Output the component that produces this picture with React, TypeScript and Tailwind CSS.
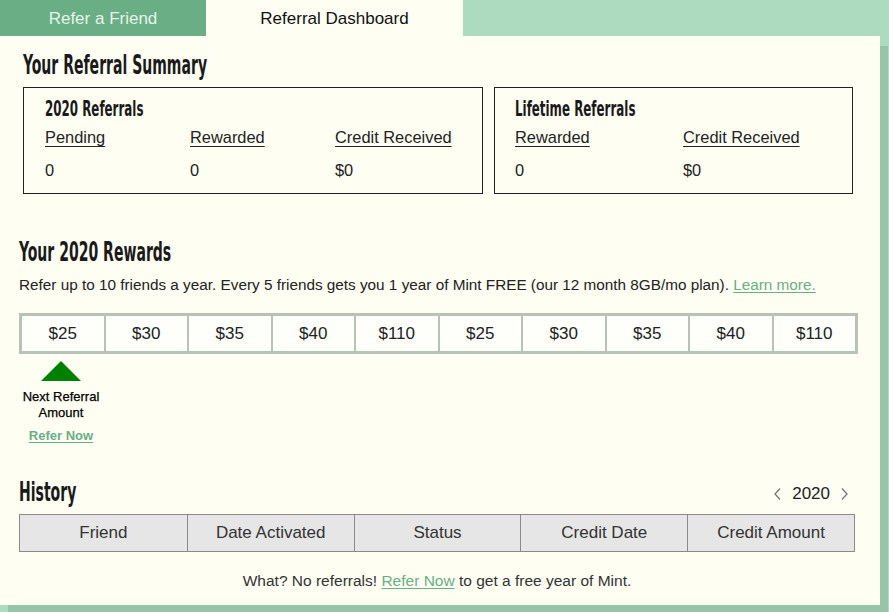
import React from "react";

const H = ({ children, className = "" }: { children: React.ReactNode; className?: string }) => (
  <div className={"h-[24px] overflow-visible whitespace-nowrap " + className}>
    <span className="inline-block origin-left scale-x-[0.6] font-['DejaVu_Sans_Condensed','DejaVu_Sans',sans-serif] [font-stretch:condensed] font-bold text-[26px] leading-[24px] text-[#1a1a1a]">
      {children}
    </span>
  </div>
);

const H3 = ({ children }: { children: React.ReactNode }) => (
  <div className="h-[20px] whitespace-nowrap">
    <span className="inline-block origin-left scale-x-[0.6] font-['DejaVu_Sans_Condensed','DejaVu_Sans',sans-serif] [font-stretch:condensed] font-bold text-[22px] leading-[20px] text-[#1a1a1a]">
      {children}
    </span>
  </div>
);

const rewards = ["$25", "$30", "$35", "$40", "$110", "$25", "$30", "$35", "$40", "$110"];
const cols = ["Friend", "Date Activated", "Status", "Credit Date", "Credit Amount"];

export default function App() {
  return (
    <div className="w-[889px] h-[612px] overflow-hidden bg-[#acdbc0] font-['Liberation_Sans',Arial,sans-serif] text-[#222]">
      <div className="flex h-[36px]">
        <div className="w-[206px] bg-[#6aae86] text-[#e6f4ea] text-[17px] flex items-center justify-center pt-[1px]">
          Refer a Friend
        </div>
        <div className="w-[257px] bg-[#fefef3] text-[#111] text-[17px] flex items-center justify-center pt-[1px]">
          Referral Dashboard
        </div>
      </div>
      <div className="w-[880px] h-[569px] bg-[#fefef3] shadow-[8px_10px_0_#98c4a9] px-[19px] pt-[17px]">
        <div className="pl-[4px]">
          <H>Your Referral Summary</H>
          <div className="flex gap-[11px] mt-[10px]">
            <div className="w-[460px] h-[107px] border border-[#222] pl-[21px] pt-[11px]">
              <H3>2020 Referrals</H3>
              <div className="grid grid-cols-[145px_145px_1fr] text-[16.4px] mt-[6px]">
                <span><span className="underline underline-offset-[3px]">Pending</span></span>
                <span><span className="underline underline-offset-[3px]">Rewarded</span></span>
                <span><span className="underline underline-offset-[3px]">Credit Received</span></span>
              </div>
              <div className="grid grid-cols-[145px_145px_1fr] text-[16.4px] mt-[8px]">
                <span>0</span>
                <span>0</span>
                <span>$0</span>
              </div>
            </div>
            <div className="w-[359px] h-[107px] border border-[#222] pl-[20px] pt-[11px]">
              <H3>Lifetime Referrals</H3>
              <div className="grid grid-cols-[168px_1fr] text-[16.4px] mt-[6px]">
                <span><span className="underline underline-offset-[3px]">Rewarded</span></span>
                <span><span className="underline underline-offset-[3px]">Credit Received</span></span>
              </div>
              <div className="grid grid-cols-[168px_1fr] text-[16.4px] mt-[8px]">
                <span>0</span>
                <span>$0</span>
              </div>
            </div>
          </div>
        </div>

        <H className="mt-[46px]">Your 2020 Rewards</H>
        <p className="text-[15.3px] mt-[12px] leading-[18px] whitespace-nowrap">
          Refer up to 10 friends a year. Every 5 friends gets you 1 year of Mint FREE (our 12 month 8GB/mo plan).{" "}
          <a className="text-[#6aae86] underline underline-offset-[2px]">Learn more.</a>
        </p>
        <div className="mt-[19px] w-[839px] grid grid-cols-10 gap-[2px] p-[3px] bg-[#b8c3b7]">
          {rewards.map((r, i) => (
            <div key={i} className="bg-[#fefefa] h-[35px] flex items-center justify-center text-[17px] text-[#222]">
              {r}
            </div>
          ))}
        </div>
        <div className="w-[84px] flex flex-col items-center">
          <div className="mt-[7px] w-0 h-0 border-l-[20px] border-r-[20px] border-b-[20px] border-l-transparent border-r-transparent border-b-[#008000]" />
          <div className="mt-[8px] text-[13px] leading-[16px] text-center text-black [-webkit-text-stroke:0.25px_black]">
            Next Referral
            <br />
            Amount
          </div>
          <a className="mt-[7px] text-[13px] font-bold leading-[16px] text-[#6aae86] underline underline-offset-[2px]">
            Refer Now
          </a>
        </div>

        <div className="flex items-end justify-between mt-[34px] w-[836px]">
          <H>History</H>
          <div className="flex items-center gap-[10px] text-[17px] text-[#222] pr-[6px] translate-y-[3px]">
            <svg width="9" height="14" viewBox="0 0 9 14" fill="none" stroke="#777" strokeWidth="1.3">
              <path d="M7 1.5 L2 7 L7 12.5" />
            </svg>
            <span>2020</span>
            <svg width="9" height="14" viewBox="0 0 9 14" fill="none" stroke="#777" strokeWidth="1.3">
              <path d="M2 1.5 L7 7 L2 12.5" />
            </svg>
          </div>
        </div>
        <div className="mt-[10px] w-[836px] grid grid-cols-5 border border-[#8a8a8a] bg-[#e6e6e6]">
          {cols.map((c, i) => (
            <div
              key={c}
              className={"h-[36px] flex items-center justify-center text-[17px] text-[#333] " + (i > 0 ? "border-l border-[#8a8a8a]" : "")}
            >
              {c}
            </div>
          ))}
        </div>
        <p className="mt-[17px] w-[836px] text-center text-[15.5px] text-[#333]">
          What? No referrals! <a className="text-[#6aae86] underline underline-offset-[2px]">Refer Now</a> to get a free year of Mint.
        </p>
      </div>
    </div>
  );
}
